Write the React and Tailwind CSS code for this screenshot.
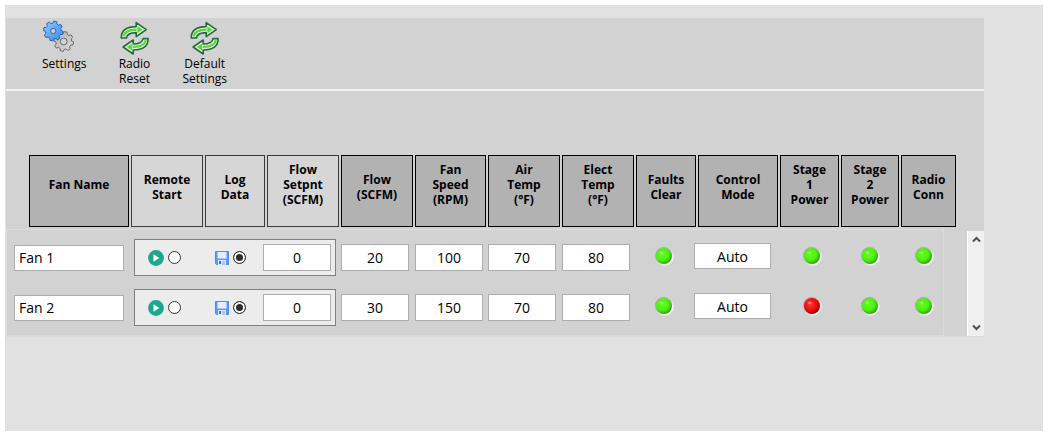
import { clsx } from 'clsx';

const COLUMNS = [
    { label: ['Fan Name'], dark: true },
    { label: ['Remote', 'Start'] },
    { label: ['Log', 'Data'] },
    { label: ['Flow', 'Setpnt', '(SCFM)'] },
    { label: ['Flow', '(SCFM)'], dark: true },
    { label: ['Fan', 'Speed', '(RPM)'], dark: true },
    { label: ['Air', 'Temp', '(°F)'], dark: true },
    { label: ['Elect', 'Temp', '(°F)'], dark: true },
    { label: ['Faults', 'Clear'], dark: true },
    { label: ['Control', 'Mode'], dark: true },
    { label: ['Stage', '1', 'Power'], dark: true },
    { label: ['Stage', '2', 'Power'], dark: true },
    { label: ['Radio', 'Conn'], dark: true, span: 2 },
];

const FANS = [
    { name: 'Fan 1', setpoint: 0, flow: 20, speed: 100, air: 70, elect: 80, faults: true, mode: 'Auto', stage1: true, stage2: true, radio: true },
    { name: 'Fan 2', setpoint: 0, flow: 30, speed: 150, air: 70, elect: 80, faults: true, mode: 'Auto', stage1: false, stage2: true, radio: true },
];

const gearPath = (cx, cy, teeth, outer, inner) => {
    const step = (Math.PI * 2) / teeth;
    const points = [];
    for (let i = 0; i < teeth; i++) {
        const a = i * step + 0.2;
        [[-0.32, inner], [-0.2, outer], [0.2, outer], [0.32, inner]].forEach(([t, r]) => {
            points.push(`${(cx + r * Math.cos(a + t * step)).toFixed(2)} ${(cy + r * Math.sin(a + t * step)).toFixed(2)}`);
        });
    }
    return `M${points.join('L')}Z`;
};

const ring = (cx, cy, r) => `M${cx - r} ${cy}a${r} ${r} 0 1 0 ${r * 2} 0a${r} ${r} 0 1 0 ${-r * 2} 0Z`;

const GearsIcon = () => (
    <svg width="32" height="32" viewBox="0 0 32 32" aria-hidden="true">
        <defs>
            <linearGradient id="gear-blue" x1="0" y1="0" x2="1" y2="1">
                <stop offset="0" stopColor="#9bcdfc" />
                <stop offset="0.5" stopColor="#62a8f5" />
                <stop offset="1" stopColor="#3f8ae6" />
            </linearGradient>
            <linearGradient id="gear-grey" x1="0" y1="0" x2="1" y2="1">
                <stop offset="0" stopColor="#b0b0b0" />
                <stop offset="1" stopColor="#dedede" />
            </linearGradient>
        </defs>
        <path d={gearPath(21.7, 21.5, 8, 9.9, 7.9) + ring(21.7, 21.5, 3.4)} fill="url(#gear-grey)" fillRule="evenodd" stroke="#6c6c6c" strokeLinejoin="round" />
        <path d={gearPath(11.3, 11, 8, 9.9, 7.9) + ring(11.3, 11, 2.6)} fill="url(#gear-blue)" fillRule="evenodd" stroke="#2a66b4" strokeLinejoin="round" />
    </svg>
);

const Arrow = ({ transform }) => (
    <g transform={transform}>
        <path
            d="M2.3 18C2 10.500 7.500 6.600 17.200 6.600V2.600L27.300 9.600L17.200 16.600V12.600C11 12.600 8 14 7.300 18Z"
            fill="#dff5dc"
            stroke="#236b3a"
            strokeWidth="1.600"
            strokeLinejoin="round"
        />
        <path d="M4.500 16.500C5.500 11.500 9.500 9.800 17.500 9.700" fill="none" stroke="#57d838" strokeWidth="2.200" />
        <path d="M18.300 6.200L23.800 9.700L18.300 13.200Z" fill="#57d838" />
    </g>
);

const RefreshIcon = () => (
    <svg width="32" height="36" viewBox="0 0 32 36" aria-hidden="true">
        <Arrow />
        <Arrow transform="rotate(180 15.700 18.300)" />
    </svg>
);

const PlayIcon = () => (
    <svg width="16" height="16" viewBox="0 0 16 16" aria-hidden="true">
        <circle cx="8" cy="8" r="7.900" fill="#1ba88c" />
        <path d="M5.500 4.300L11.300 8L5.500 11.700Z" fill="#fff" />
    </svg>
);

const DiskIcon = () => (
    <svg width="14" height="14" viewBox="0 0 14 14" aria-hidden="true">
        <path d="M0.500 0.500H13.500V13.500H1.500L0.500 12.500Z" fill="#5b9bf2" stroke="#4f8ce4" />
        <rect x="2.500" y="1" width="9" height="6.500" fill="#e3edfb" />
        <rect x="3" y="9" width="8" height="5" fill="#dbe8fa" />
        <rect x="4" y="10" width="2" height="3" fill="#3b72c4" />
        <rect x="7" y="10" width="3" height="4" fill="#a9c7f2" />
    </svg>
);

const Led = ({ on, label }) => {
    const fill = on ? 'url(#led-green)' : 'url(#led-red)';
    return (
        <svg width="20" height="20" viewBox="0 0 20 20" className="mx-auto block" role="img" aria-label={label}>
            <defs>
                <radialGradient id="led-green" cx="0.4" cy="0.38" r="0.65">
                    <stop offset="0" stopColor="#62ff26" />
                    <stop offset="0.6" stopColor="#4df010" />
                    <stop offset="1" stopColor="#2aa206" />
                </radialGradient>
                <radialGradient id="led-red" cx="0.4" cy="0.38" r="0.65">
                    <stop offset="0" stopColor="#ff3a3a" />
                    <stop offset="0.6" stopColor="#f50808" />
                    <stop offset="1" stopColor="#980303" />
                </radialGradient>
                <linearGradient id="led-rim" x1="0.15" y1="0.15" x2="0.85" y2="0.85">
                    <stop offset="0" stopColor="#a2a2a2" />
                    <stop offset="0.5" stopColor="#d2d2d2" />
                    <stop offset="1" stopColor="#ffffff" />
                </linearGradient>
            </defs>
            <circle cx="10.300" cy="10.300" r="9.500" fill="url(#led-rim)" />
            <circle cx="10" cy="10" r="8" fill={fill} />
            <ellipse cx="7.500" cy="6.800" rx="2" ry="1.500" fill="#fff" opacity="0.3" />
        </svg>
    );
};

const ToolButton = ({ icon, lines, iconClassName }) => (
    <button type="button" className="flex flex-col items-center text-[12px] leading-[15px] text-black">
        <span className={clsx('mb-1 flex h-8 w-8 items-start', iconClassName)}>{icon}</span>
        {lines.map((line) => (
            <span key={line}>{line}</span>
        ))}
    </button>
);

const Field = ({ className, ...props }) => (
    <input
        type="text"
        className={clsx('block border border-[#abadb3] bg-white text-[14px] leading-5 text-black outline-none', className)}
        {...props}
    />
);

const Radio = (props) => (
    <input
        type="radio"
        className="h-[13px] w-[13px] appearance-none rounded-full border border-[#333] bg-white checked:bg-[#2b2b2b] checked:shadow-[inset_0_0_0_2px_white]"
        {...props}
    />
);

const HeaderCell = ({ label, dark, span }) => (
    <th colSpan={span} scope="col" className="px-px pt-0 pb-[2px] font-bold first:pl-[23px]">
        <div
            className={clsx(
                'flex h-[72px] flex-col items-center justify-center border',
                dark ? 'border-black bg-[#b2b2b2]' : 'border-[#3c3c3c] bg-[#d6d6d6]',
                label.length === 2 ? 'pb-2' : 'pb-[14px]'
            )}
        >
            {label.map((line) => (
                <span key={line}>{line}</span>
            ))}
        </div>
    </th>
);

const FanRow = ({ fan, first, last }) => {
    const edge = clsx('border-[#dcdcdc]', first && 'border-t pt-[9px]', last && 'border-b pt-[10px]');
    const cell = clsx(edge, last ? 'pb-[9px]' : 'pb-[3px]');
    const status = clsx(edge, last ? 'pb-3' : 'pb-[6px]');

    return (
        <tr>
            <td className={clsx(cell, 'border-l pl-[7px]')}>
                <Field aria-label="Fan Name" defaultValue={fan.name} className="h-[26px] w-[110px] px-1" />
            </td>
            <td colSpan={3} className={clsx(cell, 'px-1')}>
                <div className="flex h-[37px] items-center border border-[#808080] bg-[#ececec] pr-1 pl-[13px]">
                    <label className="flex items-center gap-1">
                        <PlayIcon />
                        <Radio name={`${fan.name}-start`} aria-label={`${fan.name} remote start`} />
                    </label>
                    <label className="ml-[34px] flex items-center gap-1">
                        <DiskIcon />
                        <Radio name={`${fan.name}-log`} aria-label={`${fan.name} log data`} defaultChecked />
                    </label>
                    <Field aria-label="Flow Setpoint" defaultValue={fan.setpoint} className="ml-auto h-[27px] w-[68px] text-center" />
                </div>
            </td>
            {[fan.flow, fan.speed, fan.air, fan.elect].map((value, i) => (
                <td key={i} className={clsx(cell, 'pl-px')}>
                    <Field aria-label={COLUMNS[i + 4].label.join(' ')} value={value} readOnly className="h-[27px] w-[68px] text-center" />
                </td>
            ))}
            <td className={clsx(status, 'pr-1')}>
                <Led on={fan.faults} label="Faults clear" />
            </td>
            <td className={status}>
                <Field aria-label="Control Mode" defaultValue={fan.mode} className="-ml-[3px] h-[26px] w-[77px] text-center" />
            </td>
            <td className={clsx(status, 'pl-1')}>
                <Led on={fan.stage1} label="Stage 1 power" />
            </td>
            <td className={status}>
                <Led on={fan.stage2} label="Stage 2 power" />
            </td>
            <td className={clsx(status, 'border-r pl-1')}>
                <Led on={fan.radio} label="Radio connection" />
            </td>
        </tr>
    );
};

const Chevron = ({ d }) => (
    <svg width="9" height="7" viewBox="0 0 9 7" aria-hidden="true">
        <path d={d} fill="none" stroke="#505050" strokeWidth="2" />
    </svg>
);

const ScrollBar = () => (
    <div className="flex h-[105px] w-[17px] flex-none flex-col justify-between self-end border-l border-white bg-[#f0f0f0]">
        <button type="button" aria-label="Scroll up" className="flex h-[17px] items-center justify-center">
            <Chevron d="M1 5.500L4.500 2L8 5.500" />
        </button>
        <button type="button" aria-label="Scroll down" className="flex h-[17px] items-center justify-center">
            <Chevron d="M1 1.500L4.500 5L8 1.500" />
        </button>
    </div>
);

export default function App() {
    return (
        <div className="flex min-h-screen bg-white p-[5px] font-['Open_Sans','Noto_Sans',sans-serif]">
            <main className="min-w-0 flex-1 bg-[#e1e1e1] pt-[13px] pr-[59px] pl-px">
                <div className="border-b border-[#dadada] bg-[#d2d2d2]">
                    {/* Toolbar */}
                    <div className="flex items-start gap-8 border-b-2 border-[#f2f2f2] pt-[2px] pb-[3px] pl-9">
                        <ToolButton icon={<GearsIcon />} lines={['Settings']} iconClassName="self-start" />
                        <ToolButton icon={<RefreshIcon />} lines={['Radio', 'Reset']} />
                        <ToolButton icon={<RefreshIcon />} lines={['Default', 'Settings']} />
                    </div>

                    {/* Fans */}
                    <div className="flex items-start justify-between pt-16">
                        <table className="w-[951px] table-fixed border-separate border-spacing-0">
                            <colgroup>
                                <col className="w-[124px]" />
                                <col className="w-[74px]" />
                                <col className="w-[62px]" />
                                <col className="w-[74px]" />
                                <col className="w-[74px]" />
                                <col className="w-[73px]" />
                                <col className="w-[74px]" />
                                <col className="w-[74px]" />
                                <col className="w-[62px]" />
                                <col className="w-[82px]" />
                                <col className="w-[61px]" />
                                <col className="w-[60px]" />
                                <col className="w-[44px]" />
                                <col className="w-[13px]" />
                            </colgroup>
                            <thead className="text-[12px] leading-[15px] text-black">
                                <tr>
                                    {COLUMNS.map((column) => (
                                        <HeaderCell key={column.label.join(' ')} {...column} />
                                    ))}
                                </tr>
                            </thead>
                            <tbody>
                                {FANS.map((fan, i) => (
                                    <FanRow key={fan.name} fan={fan} first={i === 0} last={i === FANS.length - 1} />
                                ))}
                            </tbody>
                        </table>
                        <ScrollBar />
                    </div>
                </div>
            </main>
        </div>
    );
}
